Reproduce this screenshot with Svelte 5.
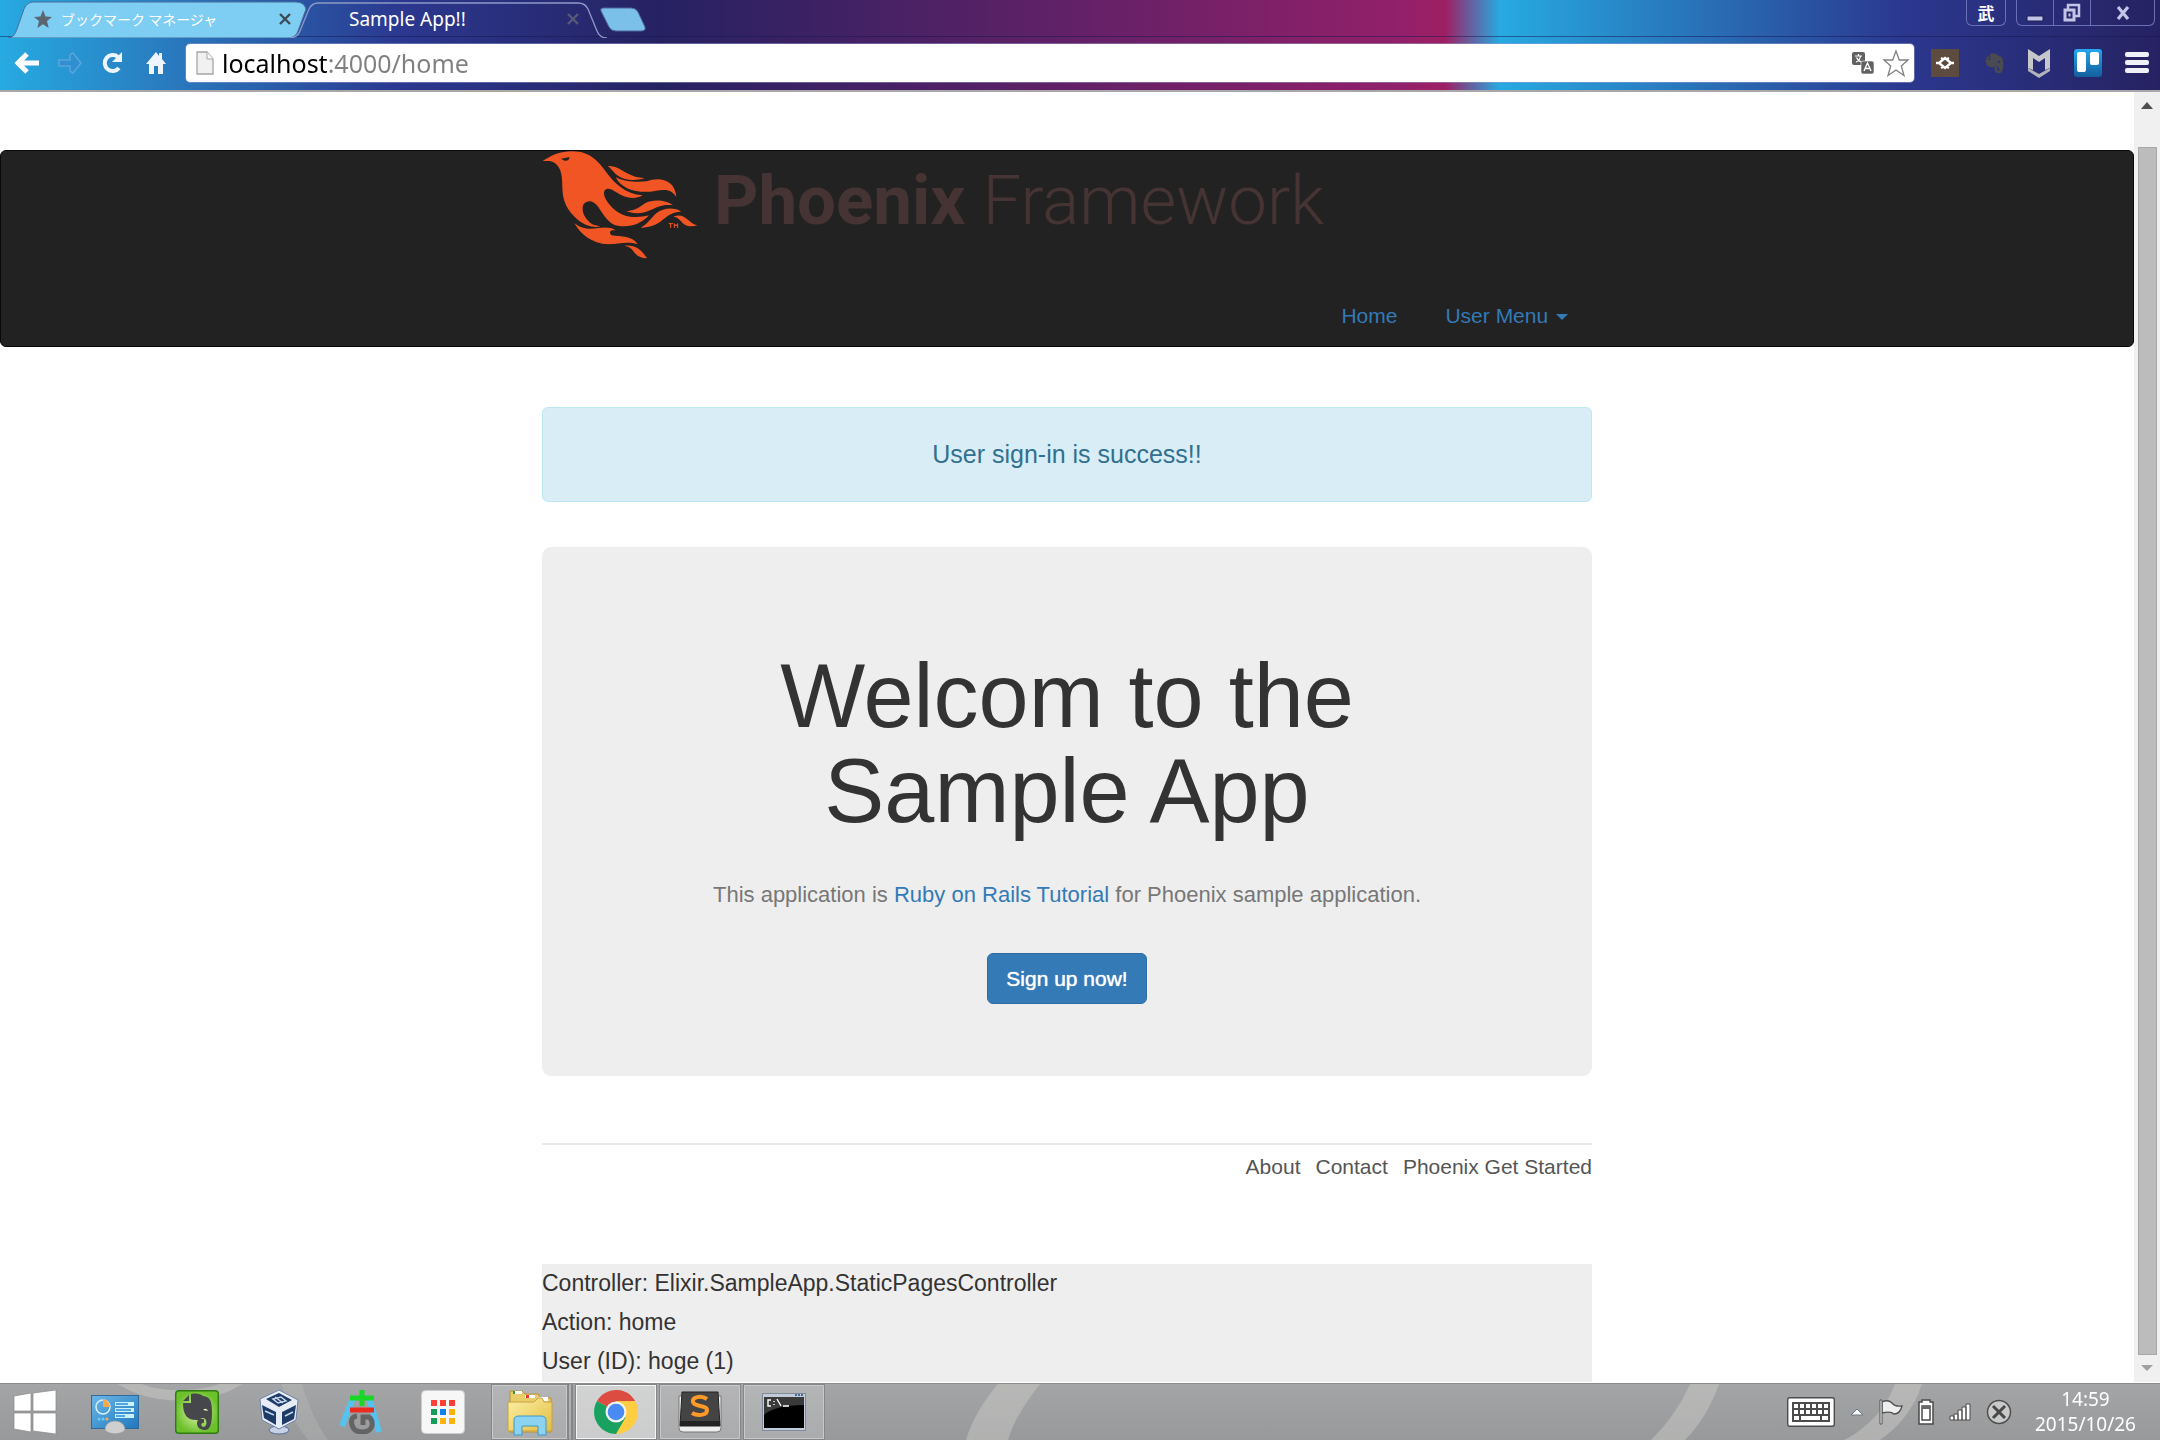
<script>
  let address = $state('localhost:4000/home');

  const debugLines = [
    'Controller: Elixir.SampleApp.StaticPagesController',
    'Action: home',
    'User (ID): hoge (1)'
  ];
  const footerLinks = ['About', 'Contact', 'Phoenix Get Started'];
  const appDots = [
    ['#ff4034', 0, 0], ['#ff4034', 9, 0], ['#ff4034', 18, 0],
    ['#129d58', 0, 9], ['#0f80ee', 9, 9], ['#fbb30c', 18, 9],
    ['#129d58', 0, 18], ['#fbb30c', 9, 18], ['#fbb30c', 18, 18]
  ];
  const keys = [0, 1, 2, 3, 4, 5];
</script>

<div class="screen">
  <header class="browser">
    <div class="tabstrip">
      <div class="tabs">
        <svg class="tab-shapes" width="660" height="38" viewBox="0 0 660 38" aria-hidden="true">
          <path d="M8 38 C14 37 15 34 17 29 L24 9 Q27 2 33 2 H296 Q304 2 306 9 L298 31 Q296 37 289 38Z" fill="#7dcef2" stroke="#4a6f9c" />
          <path d="M290 38 Q298 37 300 31 L309 9 Q312 3 318 3 H578 Q585 3 588 9 L597 31 Q600 38 607 38" fill="none" stroke="#8d9ac8" stroke-width="1.3" />
          <path d="M603 8 H631 Q636 8 638 12 L645 27 Q646 31 641 31 H616 Q611 31 609 27 L601 11 Q600 8 603 8Z" fill="#7bc0e8" stroke="#4d659f" />
        </svg>
        <div class="tab first">
          <svg width="20" height="20" viewBox="0 0 20 20" aria-hidden="true"><path d="M10 1l2.500 6.500 6.500.5-5 4 1.700 7L10 15.300 4.300 19 6 12 1 8l6.500-.5z" fill="#5c6670" /></svg>
          <span class="tab-title kana">ブックマーク マネージャ</span>
          <button class="close" aria-label="Close tab"><svg width="12" height="12" viewBox="0 0 12 12"><path d="M1 1l10 10M11 1L1 11" stroke="#3d4a54" stroke-width="2.400" /></svg></button>
        </div>
        <div class="tab second">
          <span class="tab-title">Sample App!!</span>
          <button class="close" aria-label="Close tab"><svg width="12" height="12" viewBox="0 0 12 12"><path d="M1 1l10 10M11 1L1 11" stroke="#565a78" stroke-width="2.400" /></svg></button>
        </div>
      </div>
      <div class="window-buttons">
        <button class="user">武</button>
        <div class="group">
          <button class="wb" aria-label="Minimize"><svg width="18" height="20" viewBox="0 0 18 20"><rect x="1" y="13" width="16" height="5" rx="1" fill="#c3c5e6" stroke="#1d1f55" /></svg></button>
          <button class="wb" aria-label="Restore"><svg width="20" height="20" viewBox="0 0 20 20"><path d="M6 6V2h11v11h-4" fill="none" stroke="#c3c5e6" stroke-width="2.500" /><rect x="3" y="7" width="9" height="10" fill="none" stroke="#c3c5e6" stroke-width="3" /><rect x="6.500" y="10.500" width="2" height="3" fill="#c3c5e6" /></svg></button>
          <button class="wb wide" aria-label="Close"><svg width="16" height="16" viewBox="0 0 16 16"><path d="M3 2l10 12M13 2L3 14" stroke="#c3c5e6" stroke-width="3.200" /></svg></button>
        </div>
      </div>
    </div>

    <div class="toolbar">
      <button class="tool" aria-label="Back"><svg width="26" height="24" viewBox="0 0 26 24"><path d="M13 3L4 12l9 9M5 12h20" fill="none" stroke="#fff" stroke-width="5" /></svg></button>
      <button class="tool" aria-label="Forward"><svg width="26" height="24" viewBox="0 0 26 24"><path d="M2 9h11V4l3-2 8 10-8 10-3-2v-5H2z" fill="#2f8fd0" stroke="#5aa5db" stroke-width="1.500" /></svg></button>
      <button class="tool" aria-label="Reload"><svg width="24" height="24" viewBox="0 0 24 24"><path d="M18 17a8 8 0 1 1-1-11" fill="none" stroke="#eef5fc" stroke-width="4" /><path d="M21 1v10H11z" fill="#eef5fc" /></svg></button>
      <button class="tool" aria-label="Home"><svg width="22" height="24" viewBox="0 0 22 24"><path d="M11 1L1 13h3v10h5v-8h4v8h5V13h3l-4-5V2h-3v3z" fill="#eef5fc" /></svg></button>
      <div class="omnibox">
        <svg width="18" height="24" viewBox="0 0 18 24" aria-hidden="true"><path d="M1 1h10l6 7v15H1z" fill="#f1f1f1" stroke="#a5a5a5" stroke-width="1.300" /><path d="M11 1v7h6" fill="#fff" stroke="#a5a5a5" /></svg>
        <input class="address" aria-label="Address" bind:value={address} />
        <button class="plain" aria-label="Translate this page">
          <svg width="22" height="22" viewBox="0 0 22 22"><rect width="13" height="13" rx="2" fill="#616161" /><path d="M3 4h7M6.500 2v2M4 10c3-1 4-3 4.500-6M4.500 5.500c1 2 3 4 5 4.500" stroke="#fff" stroke-width="1.200" fill="none" /><rect x="9" y="9" width="13" height="13" rx="2" fill="#616161" stroke="#fff" stroke-width=".6" /><path d="M12 19l3.500-8 3.500 8M13.500 16.500h4" stroke="#fff" stroke-width="1.400" fill="none" /></svg>
        </button>
        <button class="plain" aria-label="Bookmark this page">
          <svg width="28" height="28" viewBox="0 0 28 28"><path d="M14 2l3.300 9H26l-6.700 6 2.700 9.500-8-5.500-8 5.500L8.700 17 2 11h8.700z" fill="#fff" stroke="#808080" stroke-width="1.300" /></svg>
        </button>
      </div>
      <div class="extensions">
        <button class="plain" aria-label="Extension"><svg width="28" height="28" viewBox="0 0 28 28"><path d="M0 0h28v28H0z" fill="#5d4b3f" /><path d="M14 9l6 5-6 5-6-5zM5 14h3M20 14h3M12 10l-2-1M16 10l2-1M12 18l-2 1M16 18l2 1" fill="none" stroke="#fff" stroke-width="2.400" /></svg></button>
        <button class="plain" aria-label="Evernote"><svg width="24" height="24" viewBox="0 0 44 44"><path d="M8 15L15 7v8zM17 5c7-3 12 1 16 4 6 1 8 5 8 15 0 10-2 17-8 17-8 0-12-10-5-12l5 2c-4 0-5 5-1 5 3 0 2-8-2-8-7 1-8 3-14 1-6-1-7-8-8-13h9z" fill="#4a4b50" /><circle cx="33" cy="20" r="2" fill="#2b2f80" /></svg></button>
        <button class="plain" aria-label="McAfee"><svg width="24" height="30" viewBox="0 0 24 30"><path d="M1 1l11 7 11-7v19l-5 2V10l-6 4-6-4v12l-5-2z" fill="#c6c7ca" /><path d="M1 20l11 6 11-6v3l-11 7L1 23z" fill="#b2b4bb" /></svg></button>
        <button class="plain" aria-label="Trello"><svg width="30" height="30" viewBox="0 0 30 30"><defs><linearGradient id="tr" x2="0" y2="1"><stop stop-color="#25a7f2" /><stop offset="1" stop-color="#135f9b" /></linearGradient></defs><rect x="1" y="1" width="28" height="28" rx="3" fill="url(#tr)" /><rect x="4" y="4" width="9" height="20" rx="2" fill="#fff" /><rect x="17" y="4" width="9" height="13" rx="2" fill="#fff" /></svg></button>
        <button class="plain" aria-label="Menu"><svg width="24" height="22" viewBox="0 0 24 22"><g fill="#f0f1f8"><rect width="24" height="5" rx="2" /><rect y="8" width="24" height="5" rx="2" /><rect y="16" width="24" height="5" rx="2" /></g></svg></button>
      </div>
    </div>
  </header>

  <div class="viewport">
    <div class="page">
      <nav class="navbar">
        <div class="container nav-inner">
          <a class="logo" href="#home" aria-label="Phoenix Framework">
            <svg width="156" height="108" viewBox="36 17 468 324" fill="#f15524">
              <path d="M38 47C60 35 80 18 128 18C182 18 208 52 230 82C255 115 285 145 338 150C320 160 300 162 275 150C255 140 240 126 228 132C214 140 225 165 245 185C270 213 310 222 357 210C335 235 300 247 268 242C235 238 222 210 205 185C190 163 170 163 160 178C152 195 165 225 190 238C200 241 207 241 211 243C195 248 165 242 145 225C110 195 97 165 97 125C97 85 92 55 60 47Z" />
              <path d="M233 62C270 58 285 95 344 98C315 108 285 105 265 92C250 82 245 70 233 62Z" />
              <path d="M257 95C280 108 320 112 350 108C385 95 435 100 439 155C425 130 400 132 375 137C330 145 275 135 257 95Z" />
              <path d="M287 196C310 200 330 185 345 174C370 160 410 165 429 180C400 175 380 185 360 195C335 207 305 205 287 196Z" />
              <path d="M332 247C355 235 365 215 380 203C400 187 435 185 454 199C430 198 415 210 400 222C380 240 355 248 332 247Z" />
              <path d="M430 214C465 200 475 235 502 240C485 245 470 243 460 235C450 225 445 215 430 214Z" />
              <path d="M133 233C165 262 205 245 230 247C245 247 252 250 257 256C240 252 235 262 245 270C275 275 305 270 323 297C290 287 270 296 235 297C185 295 150 265 133 233Z" />
              <path d="M283 301C320 298 335 315 351 339C330 338 318 330 310 318C303 307 295 303 283 301Z" />
              <path d="M93 38C100 42 112 34 119 36C117 46 110 47 105 46C99 45 96 42 93 38Z" fill="#222" />
              <path d="M416 235h13M422 235v13M433 248v-13l5 7 5-7v13" fill="none" stroke="#f15524" stroke-width="3" />
            </svg>
            <span class="wordmark"><b>Phoenix</b> <span class="thin">Framework</span></span>
          </a>
          <div class="menu">
            <a href="#home">Home</a>
            <button>User Menu <span class="caret"></span></button>
          </div>
        </div>
      </nav>

      <main class="container">
        <div class="alert" role="alert">User sign-in is success!!</div>

        <section class="jumbotron">
          <h1>Welcom to the<br />Sample App</h1>
          <p>This application is <a href="#tutorial">Ruby on Rails Tutorial</a> for Phoenix sample application.</p>
          <a class="signup" href="#signup">Sign up now!</a>
        </section>

        <footer>
          {#each footerLinks as link}
            <a href="#footer">{link}</a>
          {/each}
        </footer>

        <div class="debug">
          {#each debugLines as line}
            <div>{line}</div>
          {/each}
        </div>
      </main>
    </div>

    <div class="scrollbar" aria-hidden="true">
      <svg width="12" height="8" viewBox="0 0 12 8"><path d="M0 7L6 0l6 7z" fill="#505050" /></svg>
      <div class="thumb"></div>
      <svg width="12" height="8" viewBox="0 0 12 8"><path d="M0 1l6 6 6-6z" fill="#a0a0a0" /></svg>
    </div>
  </div>

  <div class="taskbar">
    <svg class="swirls" viewBox="0 0 2160 56" preserveAspectRatio="none" aria-hidden="true">
      <g fill="#d4d4d0" opacity=".4">
        <path d="M118 0C150 22 210 22 242 0H220C195 8 160 8 142 0Z" />
        <path d="M282 0h20c6 20 14 40 26 56h-20C294 38 286 20 282 0Z" opacity=".5" />
        <path d="M998 0h42c-14 18-26 36-32 56h-42c6-20 18-40 32-56Z" />
        <path d="M1690 0h29c-8 22-18 40-34 56h-34c18-18 30-36 39-56Z" />
        <path d="M1895 0h27c-8 24-22 42-42 56h-36c24-12 42-32 51-56Z" />
      </g>
    </svg>
    <div class="launchers">
      <button class="launch start" aria-label="Start"><svg width="44" height="44" viewBox="0 0 44 44"><path d="M1 6l17-3v18H1zM20 3l23-3v21H20zM1 23h17v19L1 39zM20 23h23v21l-23-3z" fill="#fff" stroke="#888" stroke-width=".7" /></svg></button>
      <button class="launch" aria-label="Control Panel">
        <svg width="48" height="44" viewBox="0 0 48 44"><defs><linearGradient id="cp" x2="1" y2="1"><stop stop-color="#6cb8e6" /><stop offset="1" stop-color="#1f77bd" /></linearGradient></defs><rect x=".5" y="5.500" width="47" height="33" fill="url(#cp)" stroke="#2f699d" /><circle cx="12" cy="17" r="7" fill="none" stroke="#d5effc" stroke-width="1.500" /><path d="M12 17V9a8 8 0 0 1 7 8z" fill="#f5a84a" /><path d="M24 14h19M24 20h19M24 26h19" stroke="#c9f1ff" stroke-width="4" /><path d="M25 14h12M25 20h15M25 26h9" stroke="#2a8ed4" stroke-width="1.600" /><g fill="#6cf"><circle cx="8" cy="29" r="1.500" /><circle cx="12" cy="29" r="1.500" /><circle cx="16" cy="29" r="1.500" fill="#fa5" /></g><path d="M14 40c0-6 5-9 10-9s10 3 10 9c-4 5-16 5-20 0z" fill="#cfcfcf" stroke="#999" stroke-width=".6" /></svg>
      </button>
      <button class="launch" aria-label="Evernote">
        <svg width="44" height="44" viewBox="0 0 44 44"><defs><radialGradient id="ev"><stop stop-color="#e4f7b0" /><stop offset="1" stop-color="#6cc02c" /></radialGradient></defs><rect x=".7" y=".7" width="42.600" height="42.600" rx="3" fill="url(#ev)" stroke="#2f7d12" stroke-width="1.500" /><path d="M8 11l6-6v6zM16 4c6-1 10 0 12 2 7 1 9 4 9 17 0 11-2 17-7 17-4 0-8-2-8-7 0-4 3-5 7-4v4c-3-1-4 4 0 4 4-1 3-9-1-9-3 0-3 2-7 2-8 0-13-4-13-17h8z" fill="#46474a" /><path d="M28 20q3-3 5 1z" fill="#dff3b8" /></svg>
      </button>
      <button class="launch" aria-label="VirtualBox">
        <svg width="44" height="46" viewBox="0 0 44 46"><ellipse cx="22" cy="41" rx="10" ry="4" fill="#c8d2e6" stroke="#5a6c9a" /><path d="M3 10L22 1l19 10-2 20-17 9L5 31z" fill="#e5ecf5" stroke="#7082a8" /><path d="M9 10l13-6 13 7-13 7zM5 16l14 7v13L7 29zM25 23l14-7-2 14-12 6z" fill="#1d3b66" /><path d="M16 10l8-2 5 4-8 2zM18 8l8 6M8 22l9 4M28 27l8-4" fill="none" stroke="#c5d6ea" stroke-width="1.500" /></svg>
      </button>
      <button class="launch" aria-label="Calculator">
        <svg width="44" height="44" viewBox="0 0 44 44"><path d="M14 8L3 36M30 8l10 34" stroke="#55c3f0" stroke-width="6" /><path d="M18 26q-7 1-5 9 2 7 10 7t10-6q1-6-3-9h-6v8" fill="none" stroke="#646464" stroke-width="5" /><path d="M11 20h24" stroke="#ec2b20" stroke-width="5" /><path d="M11 8h24M23 0v16" stroke="#18d727" stroke-width="5" /></svg>
      </button>
      <button class="launch" aria-label="App launcher">
        <svg width="44" height="44" viewBox="0 0 44 44"><rect x=".5" y=".5" width="43" height="43" rx="4" fill="#f7f7f7" stroke="#ccc" />{#each appDots as [fill, x, y]}<rect x={x + 10} y={y + 10} width="6" height="6" {fill} />{/each}</svg>
      </button>
    </div>
    <div class="running">
      <button class="task stacked" aria-label="Explorer">
        <svg width="48" height="48" viewBox="0 0 48 48"><defs><linearGradient id="fo" x2="1" y2="1"><stop stop-color="#fbf0a8" /><stop offset="1" stop-color="#e3bd3f" /></linearGradient></defs><path d="M4 44V3h12l3 3h14v4h12v34z" fill="#e9cd68" stroke="#b8923b" /><path d="M7 3h9v3H7zM19 7h10v3H19zM32 9h10v4H32z" fill="#fff" /><path d="M7 3h2v3H7z" fill="#2a9a3c" /><path d="M20 7h3v3h-3z" fill="#e33" /><path d="M33 10h3v3h-3z" fill="#27c" /><path d="M2 14h26l4-4h4l2 4h8v29H2z" fill="url(#fo)" stroke="#c9a03f" /><path d="M8 47V32q0-4 5-4h22q5 0 5 4v15h-8V38H16v9z" fill="#8bd3f0" stroke="#3a9ac9" /></svg>
      </button>
      <button class="task active" aria-label="Chrome">
        <svg width="44" height="44" viewBox="0 0 44 44"><path d="M22 22L3 11A22 22 0 0 1 41 11z" fill="#dc4c40" /><path d="M22 22V11h19.050A22 22 0 0 1 22 44z" fill="#ffcd42" /><path d="M22 0A22 22 0 0 1 41 11H22z" fill="#dc4c40" /><path d="M22 22L3 11A22 22 0 0 0 22 44l9.500-16.500z" fill="#19a15f" /><circle cx="22" cy="22" r="10.500" fill="#f3f3f3" /><circle cx="22" cy="22" r="8.300" fill="#4a8af4" /></svg>
      </button>
      <button class="task" aria-label="Sublime Text">
        <svg width="46" height="44" viewBox="0 0 46 44"><path d="M2 6h42v32q0 4-4 4H6q-4 0-4-4z" fill="#eee" stroke="#777" /><path d="M5 2h36l2 34H3z" fill="#444" stroke="#222" /><path d="M3 31h40v5H3z" fill="#222" /><path d="M30 9c-6-4-15-2-14 3 1 5 14 3 14 8 0 6-10 6-15 3" fill="none" stroke="#ff9a28" stroke-width="4" /></svg>
      </button>
      <button class="task" aria-label="Command Prompt">
        <svg width="44" height="38" viewBox="0 0 44 38"><rect x=".5" y=".5" width="43" height="37" fill="#c2ccd8" stroke="#7f8b9b" /><path d="M33 2h9" stroke="#4b6a97" stroke-dasharray="2 1" stroke-width="2" /><path d="M2 4h40v31H2z" fill="#000" /><path d="M2 4h40v8C22 12 8 16 2 22z" fill="#3a3a3a" /><path d="M9 7H6v6h3M12 8v1M12 11v1M15 6l4 7M21 13h6" fill="none" stroke="#fff" stroke-width="1.400" /></svg>
      </button>
    </div>
    <div class="tray">
      <button class="plain kb" aria-label="Touch keyboard">
        <svg width="48" height="30" viewBox="0 0 48 30"><rect x=".7" y=".7" width="46.600" height="28.600" rx="2" fill="#fff" stroke="#4c4c4c" stroke-width="1.400" /><path d="M5 5h38v20H5z" fill="#4c4c4c" />{#each keys as k}<path d="M{7 + k * 6} 7h4v4h-4zM{7 + k * 6} 13h4v4h-4z" fill="#fff" />{/each}<path d="M7 19h5v4H7zM14 19h19v4H14zM35 19h6v4h-6z" fill="#fff" /></svg>
      </button>
      <button class="plain up" aria-label="Show hidden icons"><svg width="14" height="9" viewBox="0 0 14 9"><path d="M1 7l6-6 6 6z" fill="#fff" stroke="#6b7684" /></svg></button>
      <button class="plain flag" aria-label="Action Center"><svg width="24" height="26" viewBox="0 0 24 26"><path d="M3 3q6-3 10 1 3 4 10 3-2 8-8 8-3-3-12-1z" fill="#eee" stroke="#505050" stroke-width="1.300" /><path d="M1 1h2v24H1z" fill="#fff" stroke="#505050" /></svg></button>
      <button class="plain battery" aria-label="Battery"><svg width="16" height="26" viewBox="0 0 16 26"><path d="M1 3h3V1h8v2h3v22H1z" fill="#fff" stroke="#4a4a4a" stroke-width="1.500" /><path d="M4 7h8v14H4z" fill="#fff" stroke="#4a4a4a" stroke-width="1.500" /><path d="M4 7h8v3H4z" fill="#6a6a6a" /></svg></button>
      <button class="plain signal" aria-label="Network"><svg width="22" height="18" viewBox="0 0 22 18"><path d="M1 17v-4h4v4zM5 17v-6h4v6zM9 17V7h4v10zM13 17V4h4v13zM17 17V1h4v16z" fill="#fff" stroke="#4a4a4a" /></svg></button>
      <button class="plain ime" aria-label="Input disabled"><svg width="26" height="26" viewBox="0 0 26 26"><circle cx="13" cy="13" r="11.500" fill="#c9c9c9" stroke="#505050" stroke-width="1.500" /><path d="M7 7l12 12M19 7L7 19" stroke="#484848" stroke-width="3" /></svg></button>
      <div class="clock"><span>14:59</span><span>2015/10/26</span></div>
    </div>
  </div>
</div>

<style>
  :global(body) {
    margin: 0;
    background: #fff;
  }
  .screen {
    height: 100vh;
    display: flex;
    flex-direction: column;
    overflow: hidden;
    font-family: "Liberation Sans", Arial, sans-serif;
    color: #333;
  }
  button {
    font: inherit;
    color: inherit;
    background: none;
    border: 0;
    padding: 0;
    cursor: pointer;
  }
  a {
    color: #337ab7;
    text-decoration: none;
  }
  svg {
    display: block;
    flex: none;
  }

  /* Browser chrome */
  .browser {
    flex: none;
    border-bottom: 2px solid #a9a7aa;
    background: linear-gradient(90deg, #27aae1 0, #2b388f 400px, #262262 660px, #92206a 1400px, #9e1f63 1445px, #27aae1 1500px, #2b388f 1900px, #262262 2160px);
    font-family: "Noto Sans", "Noto Sans CJK JP", sans-serif;
  }
  .tabstrip {
    height: 37px;
    display: flex;
    justify-content: space-between;
    border-bottom: 1px solid rgba(20, 22, 80, 0.5);
    box-sizing: border-box;
  }
  .tabs {
    position: relative;
    display: flex;
  }
  .tab-shapes {
    position: absolute;
    left: 0;
    top: 0;
  }
  .tab {
    position: relative;
    display: flex;
    align-items: center;
    height: 38px;
    color: #fff;
    font-size: 19px;
    box-sizing: border-box;
  }
  .first {
    width: 301px;
    padding: 0 10px 0 33px;
    gap: 8px;
  }
  .second {
    width: 288px;
    padding: 0 10px 0 48px;
  }
  .tab-title {
    flex: 1;
    white-space: nowrap;
  }
  .kana {
    font-size: 14px;
    font-family: "Noto Sans CJK JP", sans-serif;
  }
  .window-buttons {
    display: flex;
    gap: 10px;
    padding-right: 5px;
    align-items: flex-start;
  }
  .user,
  .group {
    height: 26px;
    border: 1px solid #6a70b5;
    border-top: 0;
    border-radius: 0 0 6px 6px;
    box-sizing: border-box;
  }
  .user {
    width: 40px;
    color: #fff;
    font-size: 17px;
    font-weight: 700;
    line-height: 25px;
    font-family: "Noto Sans CJK JP", sans-serif;
  }
  .group {
    display: flex;
  }
  .wb {
    width: 37px;
    display: grid;
    place-items: center;
    border-right: 1px solid #6a70b5;
  }
  .wide {
    width: 63px;
    border-right: 0;
  }
  .toolbar {
    height: 53px;
    padding: 7px 11px 8px 14px;
    display: flex;
    align-items: center;
    gap: 17px;
    box-sizing: border-box;
  }
  .tool {
    width: 26px;
    display: grid;
    place-items: center;
  }
  .omnibox {
    flex: 1;
    height: 38px;
    display: flex;
    align-items: center;
    gap: 8px;
    padding: 0 4px 0 10px;
    background: #fff;
    border-radius: 4px;
    outline: 1px solid rgba(150, 160, 210, 0.5);
  }
  .address {
    flex: 1;
    min-width: 0;
    border: 0;
    padding: 0;
    outline: none;
    font: 25px/36px "Noto Sans", sans-serif;
    color: transparent;
    caret-color: #000;
    background: linear-gradient(90deg, #000 106px, #808080 106px);
    -webkit-background-clip: text;
    background-clip: text;
  }
  .extensions {
    display: flex;
    align-items: center;
    gap: 22px;
  }

  /* Page */
  .viewport {
    flex: 1;
    min-height: 0;
    display: flex;
    border-bottom: 1px solid #fff;
  }
  .page {
    flex: 1;
    display: flex;
    flex-direction: column;
    padding-top: 58px;
    overflow: hidden;
  }
  .container {
    width: 100%;
    max-width: 1050px;
    margin: 0 auto;
  }
  .navbar {
    flex: none;
    background: #222;
    border: 1px solid #080808;
    border-radius: 6px;
  }
  .logo {
    display: flex;
    gap: 16px;
    height: 108px;
  }
  .wordmark {
    color: #463434;
    font: 69px/100px Roboto, sans-serif;
    white-space: nowrap;
  }
  .wordmark b {
    font-weight: 700;
  }
  .thin {
    font-weight: 300;
  }
  .menu {
    display: flex;
    justify-content: flex-end;
    padding: 42px 0 15px;
    font-size: 21px;
    line-height: 30px;
  }
  .menu a,
  .menu button {
    padding: 0 24px;
    color: #337ab7;
  }
  .caret {
    display: inline-block;
    margin-left: 2px;
    vertical-align: middle;
    border: 6px solid transparent;
    border-top-color: #337ab7;
    border-bottom: 0;
  }
  main {
    flex: 1;
    display: flex;
    flex-direction: column;
    padding-top: 60px;
  }
  .alert {
    padding: 23px;
    background: #d9edf7;
    border: 1px solid #bce8f1;
    border-radius: 6px;
    color: #31708f;
    font-size: 25px;
    line-height: 47px;
    text-align: center;
  }
  .jumbotron {
    margin-top: 45px;
    padding: 102px 90px 72px;
    background: #eee;
    border-radius: 9px;
    text-align: center;
  }
  h1 {
    margin: 0;
    font-size: 90px;
    font-weight: 400;
    line-height: 95px;
  }
  p {
    margin: 35px 0 37px;
    color: #777;
    font-size: 22px;
    line-height: 42px;
  }
  .signup {
    display: inline-block;
    padding: 10px 18px;
    background: #337ab7;
    border: 1px solid #2e6da4;
    border-radius: 6px;
    color: #fff;
    font-size: 21px;
    line-height: 29px;
    text-shadow: 0 0 1px #fff;
  }
  footer {
    margin-top: 67px;
    border-top: 2px solid #eaeaea;
    padding: 7px 0 82px;
    display: flex;
    justify-content: flex-end;
    gap: 15px;
    font-size: 21px;
    line-height: 30px;
  }
  footer a {
    color: #555;
  }
  .debug {
    flex: 1;
    background: #eee;
    font-size: 23px;
    line-height: 39px;
  }
  .scrollbar {
    flex: none;
    width: 26px;
    padding: 10px 0;
    display: flex;
    flex-direction: column;
    align-items: center;
    background: #f0f0f0;
    box-sizing: border-box;
  }
  .thumb {
    flex: 1;
    width: 19px;
    margin: 37px 0 9px;
    background: #bcbcbc;
    border: 1px solid #a8a8a8;
    box-sizing: border-box;
  }

  /* Taskbar */
  .taskbar {
    flex: none;
    position: relative;
    height: 57px;
    display: flex;
    background: linear-gradient(#a4a5a6, #98999b);
    border-top: 1px solid #8b8b8d;
    box-sizing: border-box;
  }
  .swirls {
    position: absolute;
    inset: 0;
    width: 100%;
    height: 100%;
  }
  .launchers,
  .running,
  .tray {
    position: relative;
    display: flex;
    align-items: center;
  }
  .launchers {
    gap: 34px;
    padding: 0 24px 0 13px;
  }
  .launch {
    width: 48px;
    display: grid;
    place-items: center;
  }
  .start {
    width: 44px;
  }
  .running {
    gap: 2px;
    align-items: stretch;
  }
  .task {
    width: 82px;
    display: grid;
    place-items: center;
    border: 1px solid #858688;
    box-shadow: inset 0 0 0 1px #c9c9c9;
    background: rgba(255, 255, 255, 0.18);
    box-sizing: border-box;
  }
  .stacked {
    border-right: 6px double #858688;
  }
  .active {
    background: rgba(255, 255, 255, 0.5);
    box-shadow: inset 0 0 0 1px #f5f5f5;
  }
  .tray {
    margin-left: auto;
    padding-right: 24px;
    gap: 15px;
  }
  .clock {
    display: flex;
    flex-direction: column;
    align-items: center;
    margin-left: 8px;
    color: #fff;
    font: 19px/25px "Noto Sans", sans-serif;
  }
</style>
